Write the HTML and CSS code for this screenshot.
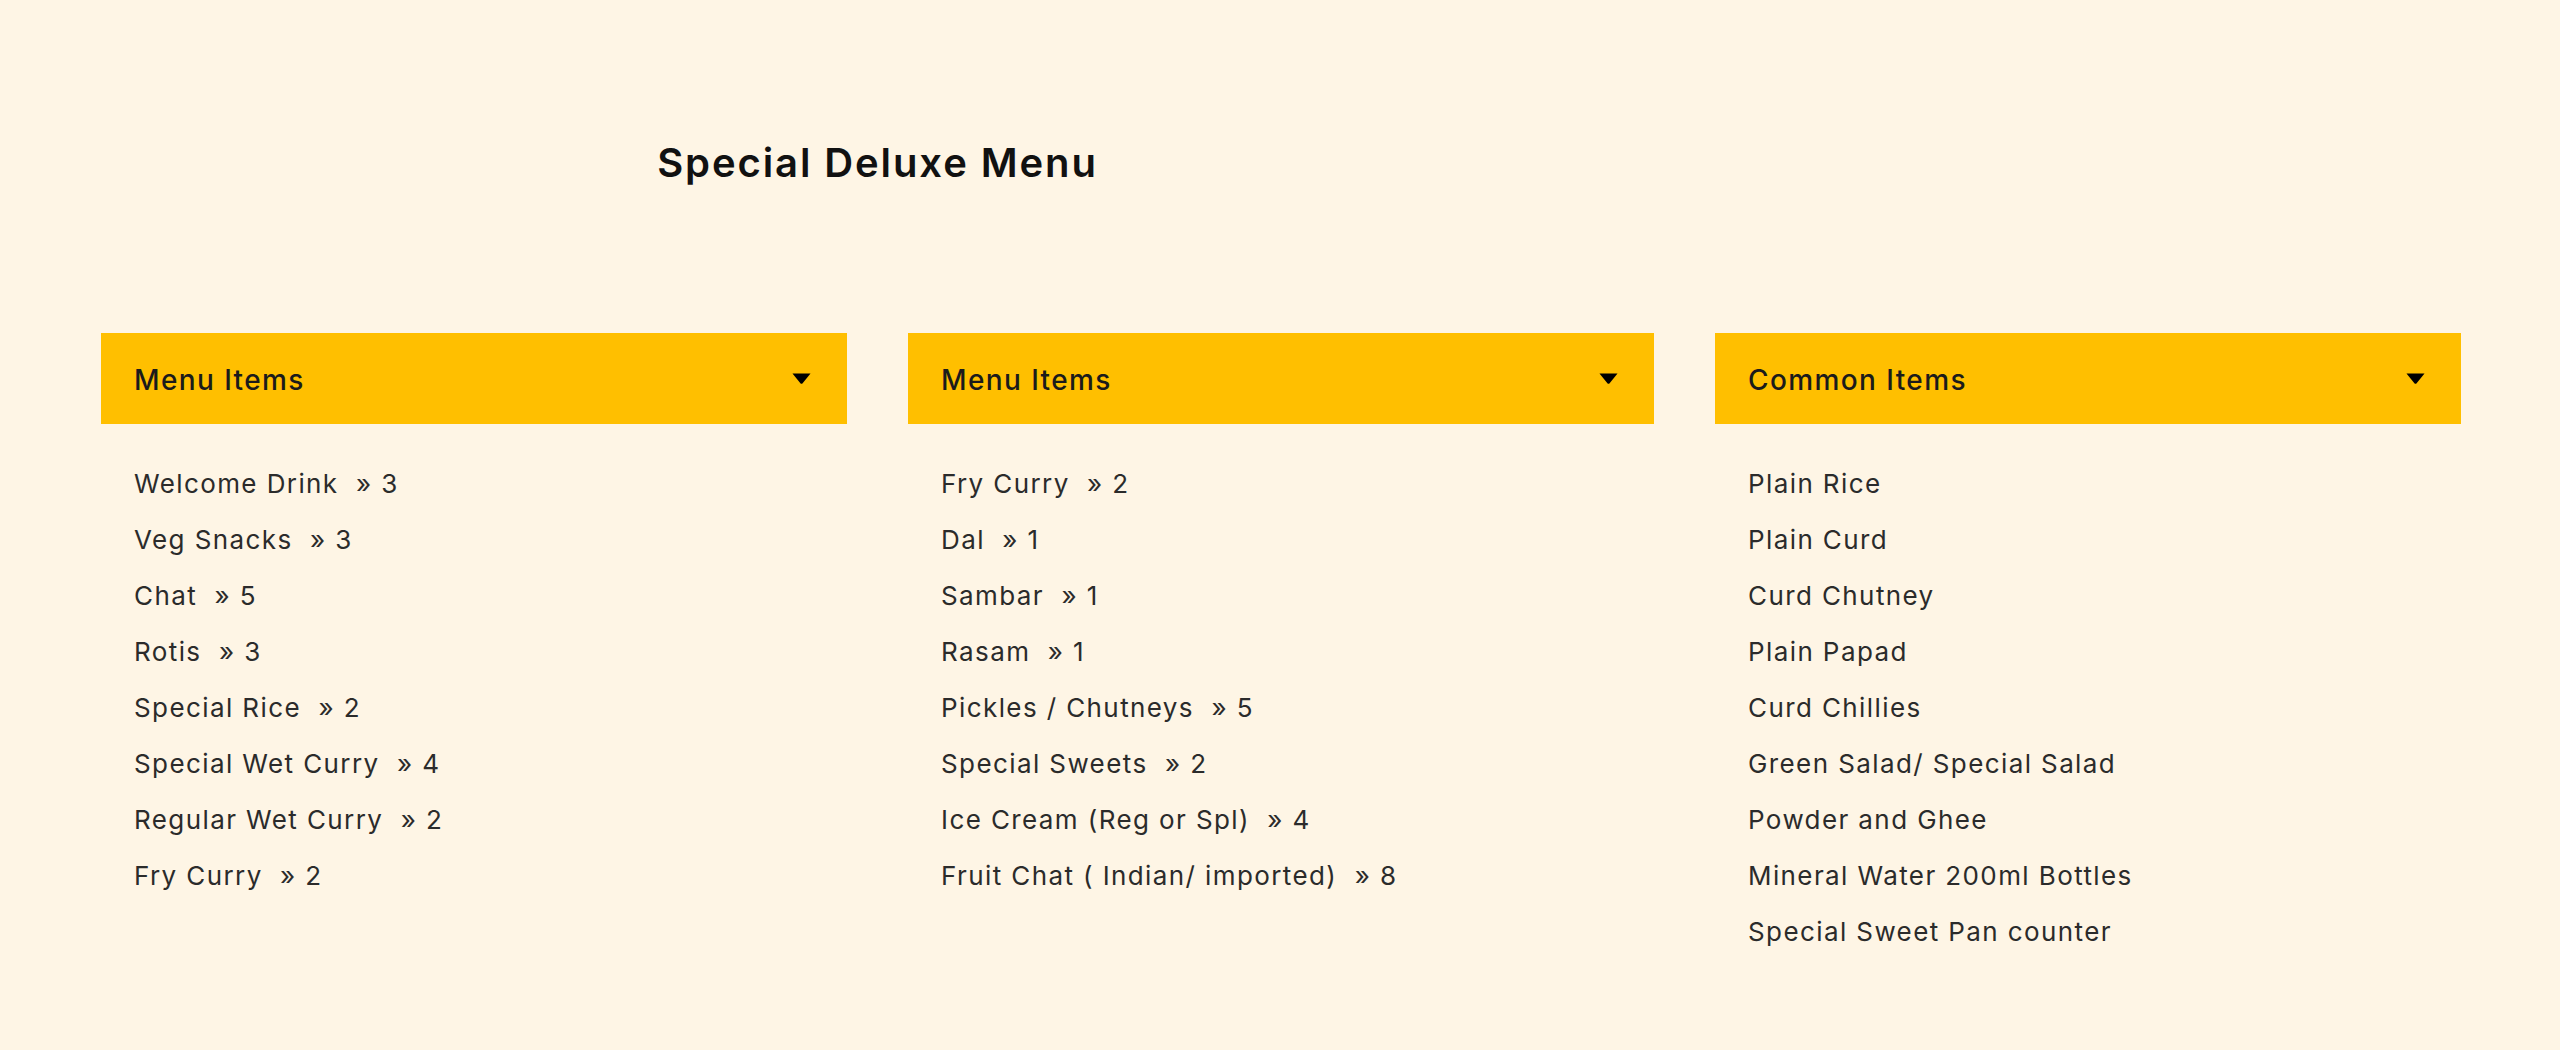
FILE: index.html
```html
<!DOCTYPE html>
<html lang="en">
<head>
<meta charset="utf-8">
<title>Special Deluxe Menu</title>
<link rel="stylesheet" href="styles.css">
</head>
<body>
<main class="page">
  <div class="title-row">
    <h2 class="title">Special Deluxe Menu</h2>
  </div>

  <div class="cols">
    <section class="col">
      <div class="col-head">
        <span class="col-title">Menu Items</span>
        <svg class="caret" viewBox="0 0 19 11" width="19" height="11"><path d="M0.5 0.5 H18.5 L10.6 10.2 Q9.5 11.2 8.4 10.2 Z" fill="#000"/></svg>
      </div>
      <ul class="items">
        <li>Welcome Drink&nbsp; » 3</li>
        <li>Veg Snacks&nbsp; » 3</li>
        <li>Chat&nbsp; » 5</li>
        <li>Rotis&nbsp; » 3</li>
        <li>Special Rice&nbsp; » 2</li>
        <li>Special Wet Curry&nbsp; » 4</li>
        <li>Regular Wet Curry&nbsp; » 2</li>
        <li>Fry Curry&nbsp; » 2</li>
      </ul>
    </section>

    <section class="col">
      <div class="col-head">
        <span class="col-title">Menu Items</span>
        <svg class="caret" viewBox="0 0 19 11" width="19" height="11"><path d="M0.5 0.5 H18.5 L10.6 10.2 Q9.5 11.2 8.4 10.2 Z" fill="#000"/></svg>
      </div>
      <ul class="items">
        <li>Fry Curry&nbsp; » 2</li>
        <li>Dal&nbsp; » 1</li>
        <li>Sambar&nbsp; » 1</li>
        <li>Rasam&nbsp; » 1</li>
        <li>Pickles / Chutneys&nbsp; » 5</li>
        <li>Special Sweets&nbsp; » 2</li>
        <li>Ice Cream (Reg or Spl)&nbsp; » 4</li>
        <li>Fruit Chat ( Indian/ imported)&nbsp; » 8</li>
      </ul>
    </section>

    <section class="col">
      <div class="col-head">
        <span class="col-title">Common Items</span>
        <svg class="caret" viewBox="0 0 19 11" width="19" height="11"><path d="M0.5 0.5 H18.5 L10.6 10.2 Q9.5 11.2 8.4 10.2 Z" fill="#000"/></svg>
      </div>
      <ul class="items">
        <li>Plain Rice</li>
        <li>Plain Curd</li>
        <li>Curd Chutney</li>
        <li>Plain Papad</li>
        <li>Curd Chillies</li>
        <li>Green Salad/ Special Salad</li>
        <li>Powder and Ghee</li>
        <li>Mineral Water 200ml Bottles</li>
        <li>Special Sweet Pan counter</li>
      </ul>
    </section>
  </div>
</main>
</body>
</html>
```

FILE: styles.css
```css
html, body {
  margin: 0;
  padding: 0;
  background: #fef5e5;
}

body {
  font-family: Inter, "Noto Sans", "Liberation Sans", sans-serif;
  color: #2a2a2a;
}

.page {
  display: flex;
  flex-direction: column;
  gap: 146px;
  padding: 139px 99px 0 101px;
}

.title-row,
.cols {
  display: grid;
  grid-template-columns: repeat(3, 1fr);
  column-gap: 61px;
}

.title {
  grid-column: 1 / span 2;
  margin: 0;
  text-align: center;
  font-size: 40px;
  line-height: 48px;
  font-weight: 600;
  color: #111;
  letter-spacing: 1.9px;
}

.col-head {
  display: flex;
  align-items: center;
  justify-content: space-between;
  height: 91px;
  box-sizing: border-box;
  padding: 3px 36px 0 33px;
  background: #ffbf00;
}

.caret {
  display: block;
  margin-top: -3px;
}

.col-title {
  font-size: 28px;
  font-weight: 500;
  color: #1b1b1b;
  letter-spacing: 1.4px;
}

.items {
  list-style: none;
  margin: 32px 0 0;
  padding: 0 0 0 33px;
}

.items li {
  font-size: 26px;
  line-height: 56px;
  color: #2b2b2b;
  letter-spacing: 1.4px;
}
```
